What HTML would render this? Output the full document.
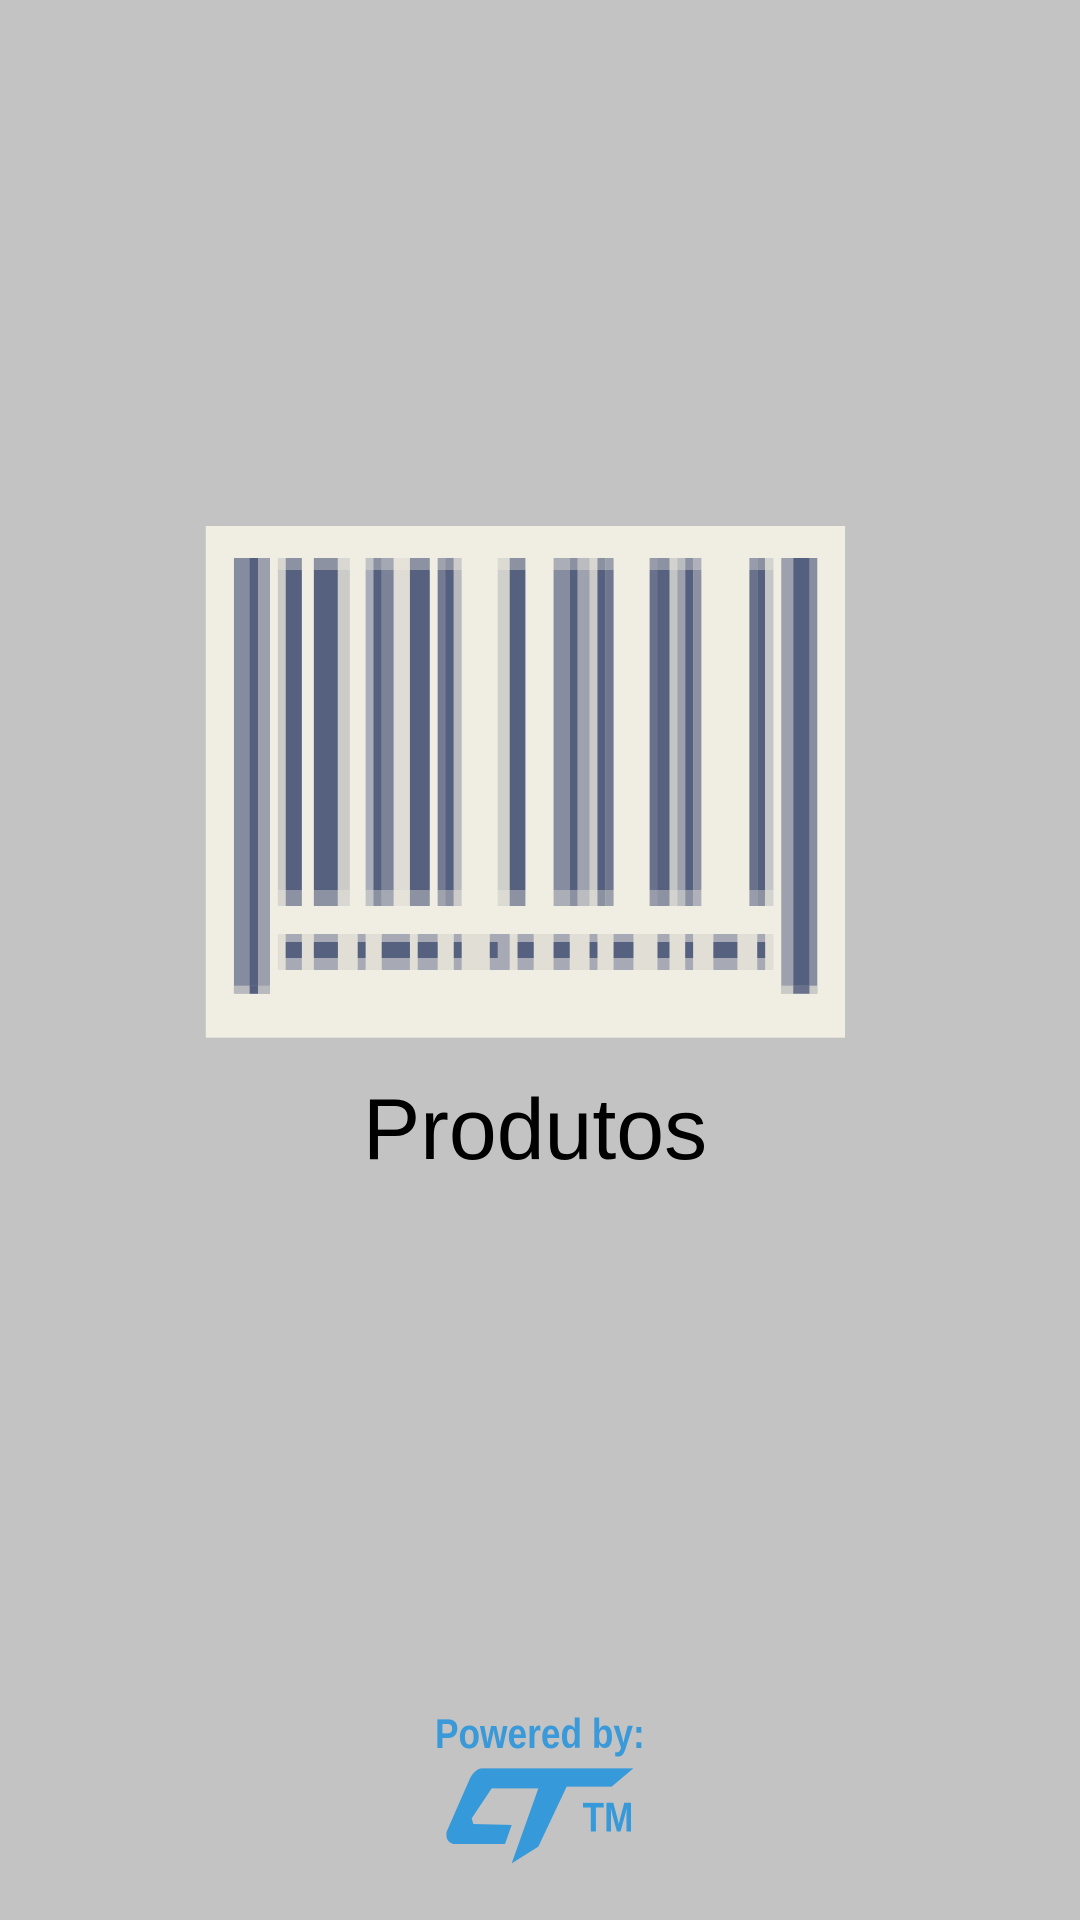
<!DOCTYPE html>
<html><head><meta charset="utf-8"><style>
html,body{margin:0;padding:0;}
body{width:1080px;height:1920px;background:#c3c3c3;position:relative;overflow:hidden;}
.t{position:absolute;left:0;width:1080px;text-align:center;font-family:"Liberation Sans",sans-serif;}
</style></head><body>
<svg style="position:absolute;left:200px;top:520px" width="650" height="520" viewBox="0 0 1570 1560" preserveAspectRatio="none">
<rect x="14" y="18" width="1544" height="1535" fill="#f0ede2"/>
<g>
<rect x="82" y="114" width="87" height="1307" fill="#868c9f"/>
<rect x="140" y="114" width="29" height="1307" fill="#9ca0ad"/>
<rect x="120" y="114" width="20" height="1307" fill="#55607f"/>
<rect x="82" y="1397" width="87" height="24" fill="#b8b9bc"/>
<rect x="120" y="1397" width="20" height="24" fill="#55607f"/>

<rect x="188" y="114" width="19" height="1044" fill="#cacac6"/>
<rect x="207" y="114" width="39" height="1044" fill="#56617f"/>
<rect x="275" y="114" width="58" height="1044" fill="#56617f"/>
<rect x="333" y="114" width="29" height="1044" fill="#cbcbc8"/>
<rect x="400" y="114" width="19" height="1044" fill="#a9adb9"/>
<rect x="419" y="114" width="20" height="1044" fill="#55607f"/>
<rect x="439" y="114" width="29" height="1044" fill="#7c8399"/>
<rect x="468" y="114" width="39" height="1044" fill="#dedcd4"/>
<rect x="507" y="114" width="48" height="1044" fill="#56617f"/>
<rect x="574" y="114" width="19" height="1044" fill="#747b93"/>
<rect x="593" y="114" width="20" height="1044" fill="#55607f"/>
<rect x="613" y="114" width="19" height="1044" fill="#b8b9bd"/>
<rect x="719" y="114" width="29" height="1044" fill="#cfcfcb"/>
<rect x="748" y="114" width="38" height="1044" fill="#56617f"/>
<rect x="854" y="114" width="39" height="1044" fill="#868da0"/>
<rect x="893" y="114" width="19" height="1044" fill="#55607f"/>
<rect x="912" y="114" width="29" height="1044" fill="#9ea2ae"/>
<rect x="941" y="114" width="19" height="1044" fill="#cacac8"/>
<rect x="960" y="114" width="19" height="1044" fill="#55607f"/>
<rect x="979" y="114" width="20" height="1044" fill="#6f7790"/>
<rect x="1086" y="114" width="19" height="1044" fill="#69718c"/>
<rect x="1105" y="114" width="29" height="1044" fill="#56617f"/>
<rect x="1134" y="114" width="19" height="1044" fill="#c3c4c3"/>
<rect x="1153" y="114" width="19" height="1044" fill="#9da1ad"/>
<rect x="1172" y="114" width="19" height="1044" fill="#55607f"/>
<rect x="1191" y="114" width="20" height="1044" fill="#8b91a3"/>
<rect x="1327" y="114" width="19" height="1044" fill="#69718c"/>
<rect x="1346" y="114" width="19" height="1044" fill="#55607f"/>
<rect x="1365" y="114" width="20" height="1044" fill="#c4c5c6"/>
<rect x="188" y="114" width="1197" height="36" fill="#f0ede2" opacity="0.35"/>
<rect x="188" y="1110" width="1197" height="48" fill="#f0ede2" opacity="0.35"/>

<rect x="1404" y="114" width="29" height="1307" fill="#9da1ad"/>
<rect x="1433" y="114" width="39" height="1307" fill="#55607f"/>
<rect x="1472" y="114" width="19" height="1307" fill="#868da0"/>
<rect x="1404" y="1397" width="87" height="24" fill="#c9c9c6"/>
<rect x="1433" y="1397" width="39" height="24" fill="#69718c"/>

<rect x="188" y="1242" width="1197" height="108" fill="#e0ded5"/>
<g fill="#a7aab4">
<rect x="207" y="1242" width="39" height="108"/><rect x="275" y="1242" width="58" height="108"/>
<rect x="381" y="1242" width="19" height="108"/><rect x="439" y="1242" width="68" height="108"/>
<rect x="526" y="1242" width="48" height="108"/><rect x="613" y="1242" width="19" height="108"/>
<rect x="700" y="1242" width="48" height="108"/><rect x="767" y="1242" width="39" height="108"/>
<rect x="854" y="1242" width="39" height="108"/><rect x="941" y="1242" width="19" height="108"/>
<rect x="999" y="1242" width="48" height="108"/><rect x="1105" y="1242" width="29" height="108"/>
<rect x="1172" y="1242" width="19" height="108"/><rect x="1240" y="1242" width="58" height="108"/>
<rect x="1346" y="1242" width="19" height="108"/></g>
<g fill="#56617f">
<rect x="207" y="1266" width="39" height="48"/><rect x="275" y="1266" width="58" height="48"/>
<rect x="381" y="1266" width="19" height="48"/><rect x="439" y="1266" width="68" height="48"/>
<rect x="526" y="1266" width="48" height="48"/><rect x="613" y="1266" width="19" height="48"/>
<rect x="700" y="1266" width="19" height="48"/><rect x="767" y="1266" width="39" height="48"/>
<rect x="854" y="1266" width="39" height="48"/><rect x="941" y="1266" width="19" height="48"/>
<rect x="999" y="1266" width="48" height="48"/><rect x="1105" y="1266" width="29" height="48"/>
<rect x="1172" y="1266" width="19" height="48"/><rect x="1240" y="1266" width="58" height="48"/>
<rect x="1346" y="1266" width="19" height="48"/></g>
</g>
</svg>
<div class="t" style="top:1087px;font-size:86px;line-height:86px;color:#000;left:-5px">Produtos</div>
<div class="t" style="top:1711px;font-size:42px;line-height:46px;color:#3a9ad9;font-weight:bold;font-family:'Liberation Sans Narrow','Liberation Sans',sans-serif;left:0;"><span style="display:inline-block;transform:scaleX(0.84)">Powered by:</span></div>
<svg style="position:absolute;left:420px;top:1700px" width="240" height="170" viewBox="0 0 720 510">
<path d="M185 205 L640 205 L575 260 L440 260 L355 440 L275 490 L355 265 L215 265 L155 355 L160 372 L275 375 L255 432 L100 432 Q75 425 80 395 L150 235 Q165 207 185 205 Z" fill="#3599da"/>
<text x="488" y="395" font-family="Liberation Sans Narrow, Liberation Sans, sans-serif" font-weight="bold" font-size="124" fill="#3599da" textLength="152" lengthAdjust="spacingAndGlyphs">TM</text>
</svg>
</body></html>
